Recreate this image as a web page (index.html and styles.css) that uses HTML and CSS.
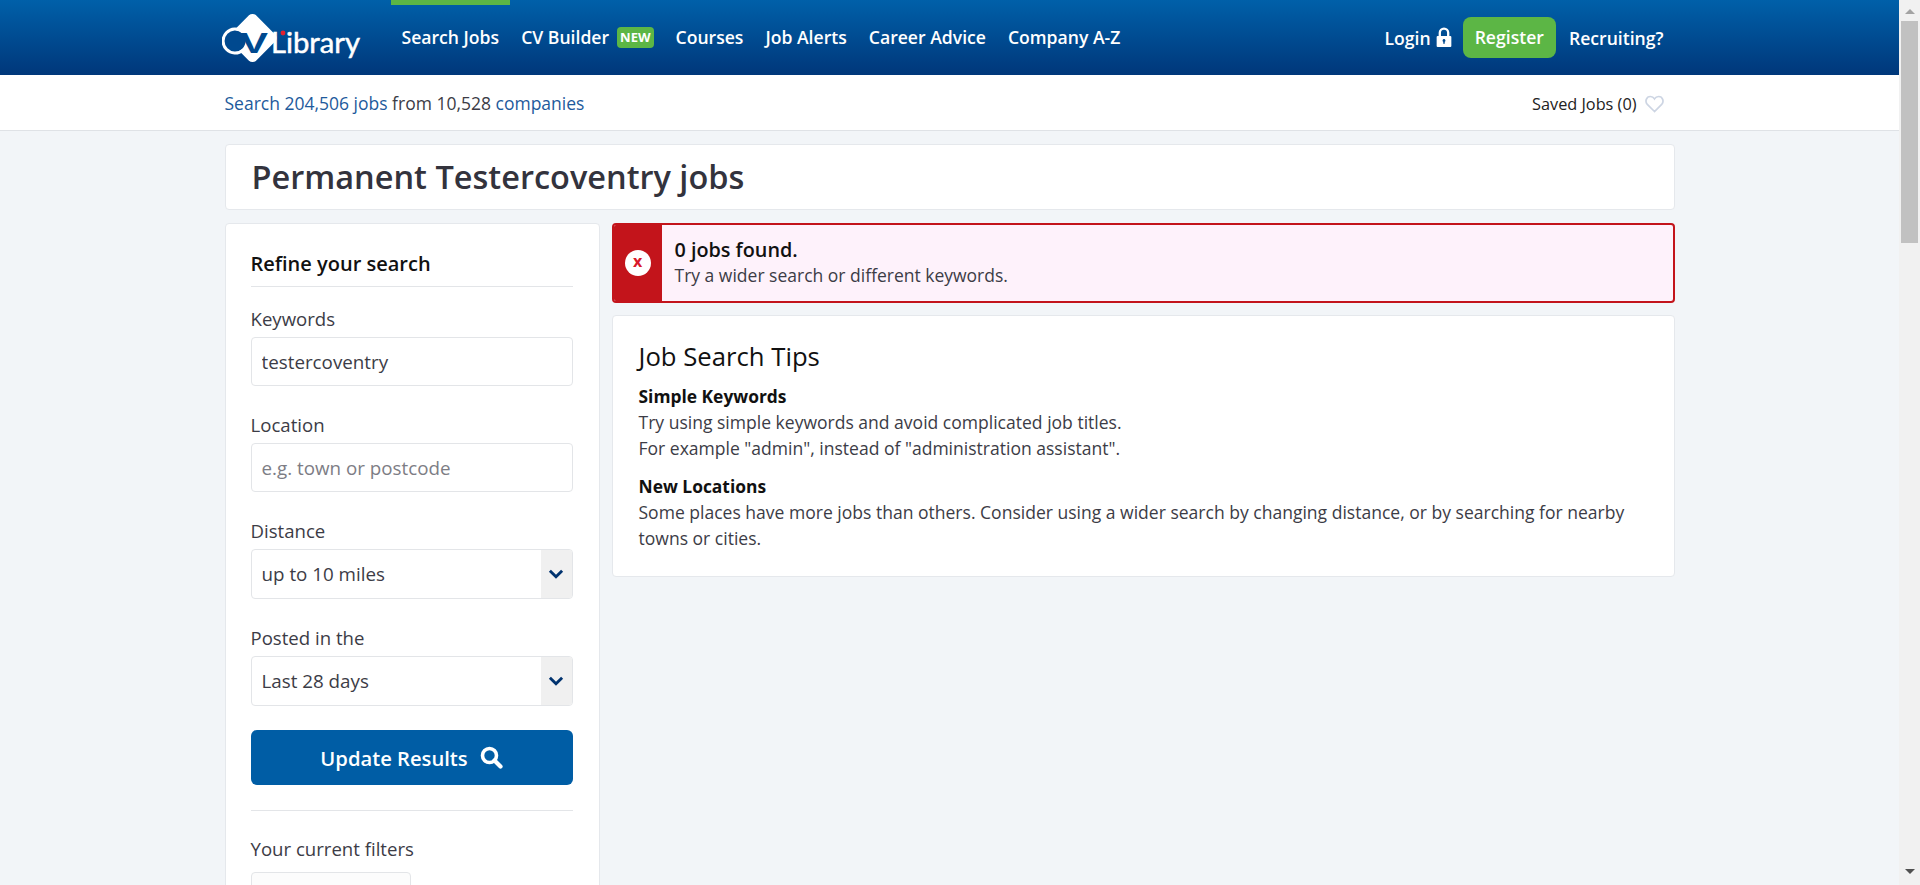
FILE: index.html
```html
<!DOCTYPE html>
<html lang="en">
<head>
<meta charset="utf-8">
<title>Permanent Testercoventry jobs</title>
<link rel="stylesheet" href="styles.css">
</head>
<body>
<div class="page">
<header class="topbar">
  <div class="wrap topbar-in">
    <a class="logo" href="#" aria-label="CV-Library">
      <svg width="142" height="56" viewBox="0 0 142 56">
        <rect x="12" y="10.500" width="37" height="37" rx="5" transform="rotate(45 30.500 29)" fill="#fff"/>
        <circle cx="12.500" cy="32" r="11" fill="#00498f"/>
        <path d="M21 23 A12 12 0 1 0 21 41" fill="none" stroke="#fff" stroke-width="3" stroke-linecap="round"/>
        <text class="logo-v" x="18" y="44" textLength="28" lengthAdjust="spacingAndGlyphs">V</text>
        <text class="logo-t" x="49" y="44" textLength="89" lengthAdjust="spacingAndGlyphs">Library</text>
        <circle cx="61" cy="24" r="2.400" fill="#e3212f"/>
      </svg>
    </a>
    <nav class="nav">
      <a class="nav-item active" href="#">Search Jobs</a>
      <a class="nav-item" href="#">CV Builder<span class="badge">NEW</span></a>
      <a class="nav-item" href="#">Courses</a>
      <a class="nav-item" href="#">Job Alerts</a>
      <a class="nav-item" href="#">Career Advice</a>
      <a class="nav-item" href="#">Company A-Z</a>
    </nav>
    <div class="account">
      <a class="login" href="#">Login
        <svg width="16" height="21" viewBox="0 0 15 20"><path d="M3.500 9V5.500a4 4 0 0 1 8 0V9" fill="none" stroke="#fff" stroke-width="2.200"/><path fill="#fff" fill-rule="evenodd" d="M1.500 8.500h12a1 1 0 0 1 1 1v8.500a1 1 0 0 1-1 1h-12a1 1 0 0 1-1-1V9.500a1 1 0 0 1 1-1zM7.500 11.500a1.400 1.400 0 0 0-.7 2.600V16h1.400v-1.900a1.400 1.400 0 0 0-.7-2.600z"/></svg>
      </a>
      <a class="register" href="#">Register</a>
      <a class="recruiting" href="#">Recruiting?</a>
    </div>
  </div>
</header>
<div class="subbar">
  <div class="wrap subbar-in">
    <p class="stats"><a href="#">Search 204,506 jobs</a> from 10,528 <a href="#">companies</a></p>
    <a class="saved" href="#">Saved Jobs (0)
      <svg width="19" height="18" viewBox="0 0 19 18"><path d="M9.500 16.500 L2.300 9.300 C-.3 6.500 1.300 1.500 5.300 1.500 C7 1.500 8.500 2.300 9.500 3.900 C10.500 2.300 12 1.500 13.700 1.500 C17.700 1.500 19.300 6.500 16.700 9.300 Z" fill="none" stroke="#cdd5e3" stroke-width="1.700"/></svg>
    </a>
  </div>
</div>
<main class="wrap content">
  <section class="card title-card"><h1>Permanent Testercoventry jobs</h1></section>
  <div class="columns">
    <aside class="card sidebar">
      <h2>Refine your search</h2>
      <form class="form">
        <label class="field"><span class="label">Keywords</span><input class="control" type="text" value="testercoventry"></label>
        <label class="field"><span class="label">Location</span><input class="control" type="text" placeholder="e.g. town or postcode"></label>
        <label class="field"><span class="label">Distance</span>
          <span class="select-wrap"><select class="control"><option>up to 10 miles</option></select>
            <span class="arrow"><svg width="16" height="10" viewBox="0 0 14 9"><path d="M1.500 1.500 7 7l5.500-5.500" fill="none" stroke="#00336f" stroke-width="2.600"/></svg></span></span></label>
        <label class="field"><span class="label">Posted in the</span>
          <span class="select-wrap"><select class="control"><option>Last 28 days</option></select>
            <span class="arrow"><svg width="16" height="10" viewBox="0 0 14 9"><path d="M1.500 1.500 7 7l5.500-5.500" fill="none" stroke="#00336f" stroke-width="2.600"/></svg></span></span></label>
        <button class="update" type="button">Update Results
          <svg width="23" height="23" viewBox="0 0 23 23"><circle cx="9.500" cy="9.500" r="7" fill="none" stroke="#fff" stroke-width="3.600"/><path d="M14.500 14.500 20.500 20.500" stroke="#fff" stroke-width="4.200" stroke-linecap="round"/></svg>
        </button>
      </form>
      <hr class="rule">
      <p class="filters-label">Your current filters</p>
      <div class="chip"></div>
    </aside>
    <div class="results">
      <div class="alert">
        <div class="alert-icon"><span class="alert-dot">x</span></div>
        <div class="alert-text"><strong>0 jobs found.</strong><span>Try a wider search or different keywords.</span></div>
      </div>
      <section class="card tips">
        <h2>Job Search Tips</h2>
        <h3>Simple Keywords</h3>
        <p>Try using simple keywords and avoid complicated job titles.<br>For example "admin", instead of "administration assistant".</p>
        <h3>New Locations</h3>
        <p>Some places have more jobs than others. Consider using a wider search by changing distance, or by searching for nearby towns or cities.</p>
      </section>
    </div>
  </div>
</main>
</div>
<div class="scrollbar" aria-hidden="true">
  <span class="sb-btn"><i class="tri-up"></i></span>
  <span class="sb-thumb"></span>
  <span class="sb-btn sb-end"><i class="tri-down"></i></span>
</div>
</body>
</html>
```
FILE: styles.css
```css
* { box-sizing: border-box; }
html, body { height: 100%; overflow: hidden; }
body {
  margin: 0;
  display: flex;
  background: #f2f5f8;
  color: #3c3c46;
  font-family: "Open Sans", sans-serif;
  font-size: 17.6px;
  line-height: 26px;
}
a { color: inherit; text-decoration: none; }
.page { flex: 1; min-width: 0; height: 100%; overflow: hidden; }
.scrollbar { width: 21px; flex: none; height: 100%; background: #f1f1f1; display: flex; flex-direction: column; align-items: center; }
.sb-btn { height: 21px; flex: none; display: flex; justify-content: center; align-items: flex-start; padding-top: 9px; }
.sb-end { margin-top: auto; padding-top: 5px; }
.sb-thumb { width: 17px; height: 222px; flex: none; background: #c1c1c1; }
.tri-up, .tri-down { display: block; width: 0; height: 0; border-left: 5px solid transparent; border-right: 5px solid transparent; }
.tri-up { border-bottom: 5px solid #a3a3a3; }
.tri-down { border-top: 5px solid #505050; }
.wrap { width: 1450px; margin: 0 auto; }

.topbar {
  height: 75px;
  background: linear-gradient(#0060a9, #00377a);
  color: #fff;
}
.topbar-in { display: flex; align-items: stretch; height: 100%; }
.logo { width: 166px; margin-left: -3px; margin-right: 3px; padding-top: 9px; display: block; }
.logo svg { display: block; }
.logo-v { font: 700 29px "Liberation Sans", sans-serif; fill: #00498f; }
.logo-t { font: 400 29px "Lato", sans-serif; fill: #fff; stroke: #fff; stroke-width: .5px; }
.nav { display: flex; }
.nav-item {
  display: flex; align-items: center;
  padding: 0 11px 6px;
  font-weight: 600;
  border-top: 5px solid transparent;
}
.nav-item.active { border-top-color: #5cb645; }
.badge {
  margin-left: 8px;
  padding: 0 3px;
  height: 21px;
  line-height: 21px;
  border-radius: 4px;
  background: #5cb645;
  font-size: 13px;
  font-weight: 700;
}
.account { margin-left: auto; display: flex; align-items: center; font-weight: 600; padding-right: 11px; }
.login { display: flex; align-items: center; gap: 5px; }
.register {
  margin: 0 13px 0 11px;
  padding: 0 12px;
  height: 41px;
  line-height: 40px;
  border-radius: 8px;
  background: #5cb645;
}

.subbar { height: 56px; background: #fff; border-bottom: 1px solid #dfe2e6; }
.subbar-in { display: flex; align-items: center; justify-content: space-between; height: 100%; padding-top: 1px; }
.stats { margin: 0; font-size: 17.5px; }
.stats a { color: #1e5a9c; }
.saved { display: flex; align-items: center; gap: 8px; font-size: 16.3px; color: #222; padding: 1px 11px 0 0; }

.card { background: #fff; border: 1px solid #e5e8ec; border-radius: 4px; }
.content { padding-top: 13px; }
.title-card { height: 66px; padding: 0 25px 0 26px; display: flex; align-items: center; }
h1 { margin: 0; font-size: 32.5px; font-weight: 600; line-height: 40px; color: #33333d; }
.columns { display: flex; align-items: flex-start; gap: 12px; margin-top: 13px; }
.sidebar { width: 375px; height: 3050px; padding: 26px 26px 0 25px; flex: none; }
.sidebar h2 { margin: 0; padding-bottom: 9px; border-bottom: 1px solid #e3e5e8; font-size: 20px; font-weight: 600; line-height: 27px; color: #111; }
.form { display: flex; flex-direction: column; }
.field { display: block; margin-top: 26px; }
.field:first-child { margin-top: 19px; }
.label { display: block; margin-bottom: 5px; font-size: 18.6px; line-height: 26px; }
.control {
  display: block; width: 100%; height: 49px;
  padding: 0 10px;
  border: 1px solid #e3e5e8; border-radius: 4px;
  background: #fff;
  font: 18.8px "Open Sans", sans-serif;
  color: #3c3c46;
  appearance: none;
  outline: none;
}
select.control { height: 50px; }
.control::placeholder { color: #7d7d85; opacity: 1; }
.select-wrap { display: block; position: relative; }
.arrow {
  position: absolute; top: 1px; right: 1px; bottom: 1px; width: 31px;
  display: flex; align-items: center; justify-content: center;
  background: #f0f0f0;
  border-radius: 0 3px 3px 0;
}
.update {
  display: flex; align-items: center; justify-content: center; gap: 12px;
  height: 55px; width: 100%; margin-top: 24px;
  border: 0; border-radius: 6px;
  background: #005da5; color: #fff;
  font: 600 20.2px "Open Sans", sans-serif;
}
.rule { margin: 25px 0; border: 0; border-top: 1px solid #e3e5e8; }
.filters-label { margin: 0; font-size: 18.6px; line-height: 26px; }
.chip { width: 160px; height: 49px; margin-top: 10px; border: 1px solid #e3e5e8; border-radius: 4px; background: #fcfcfc; }

.results { flex: 1; min-width: 0; display: flex; flex-direction: column; gap: 12px; }
.alert { display: flex; height: 80px; border: 2px solid #c3141b; border-radius: 4px; background: #fef2fb; overflow: hidden; }
.alert-icon { width: 48px; flex: none; background: #c3141b; display: flex; align-items: center; justify-content: center; }
.alert-dot { width: 26px; height: 26px; border-radius: 50%; background: #fff; color: #d9182a; font: 700 16px/23px "Open Sans", sans-serif; text-align: center; }
.alert-text { display: flex; flex-direction: column; justify-content: center; padding: 0 0 2px 13px; }
.alert-text strong { font-size: 19.8px; font-weight: 600; line-height: 26px; color: #111; }
.alert-text span { font-size: 17.5px; line-height: 25px; }
.tips { height: 262px; padding: 24px 25px 24px 26px; font-size: 17.55px; }
.tips h2 { margin: 0 0 9px; font-size: 25.7px; font-weight: 500; line-height: 34px; color: #111; }
.tips h3 { margin: 0; font-size: 17.4px; font-weight: 700; line-height: 26px; color: #111; }
.tips p { margin: 0 0 12px; }
```
